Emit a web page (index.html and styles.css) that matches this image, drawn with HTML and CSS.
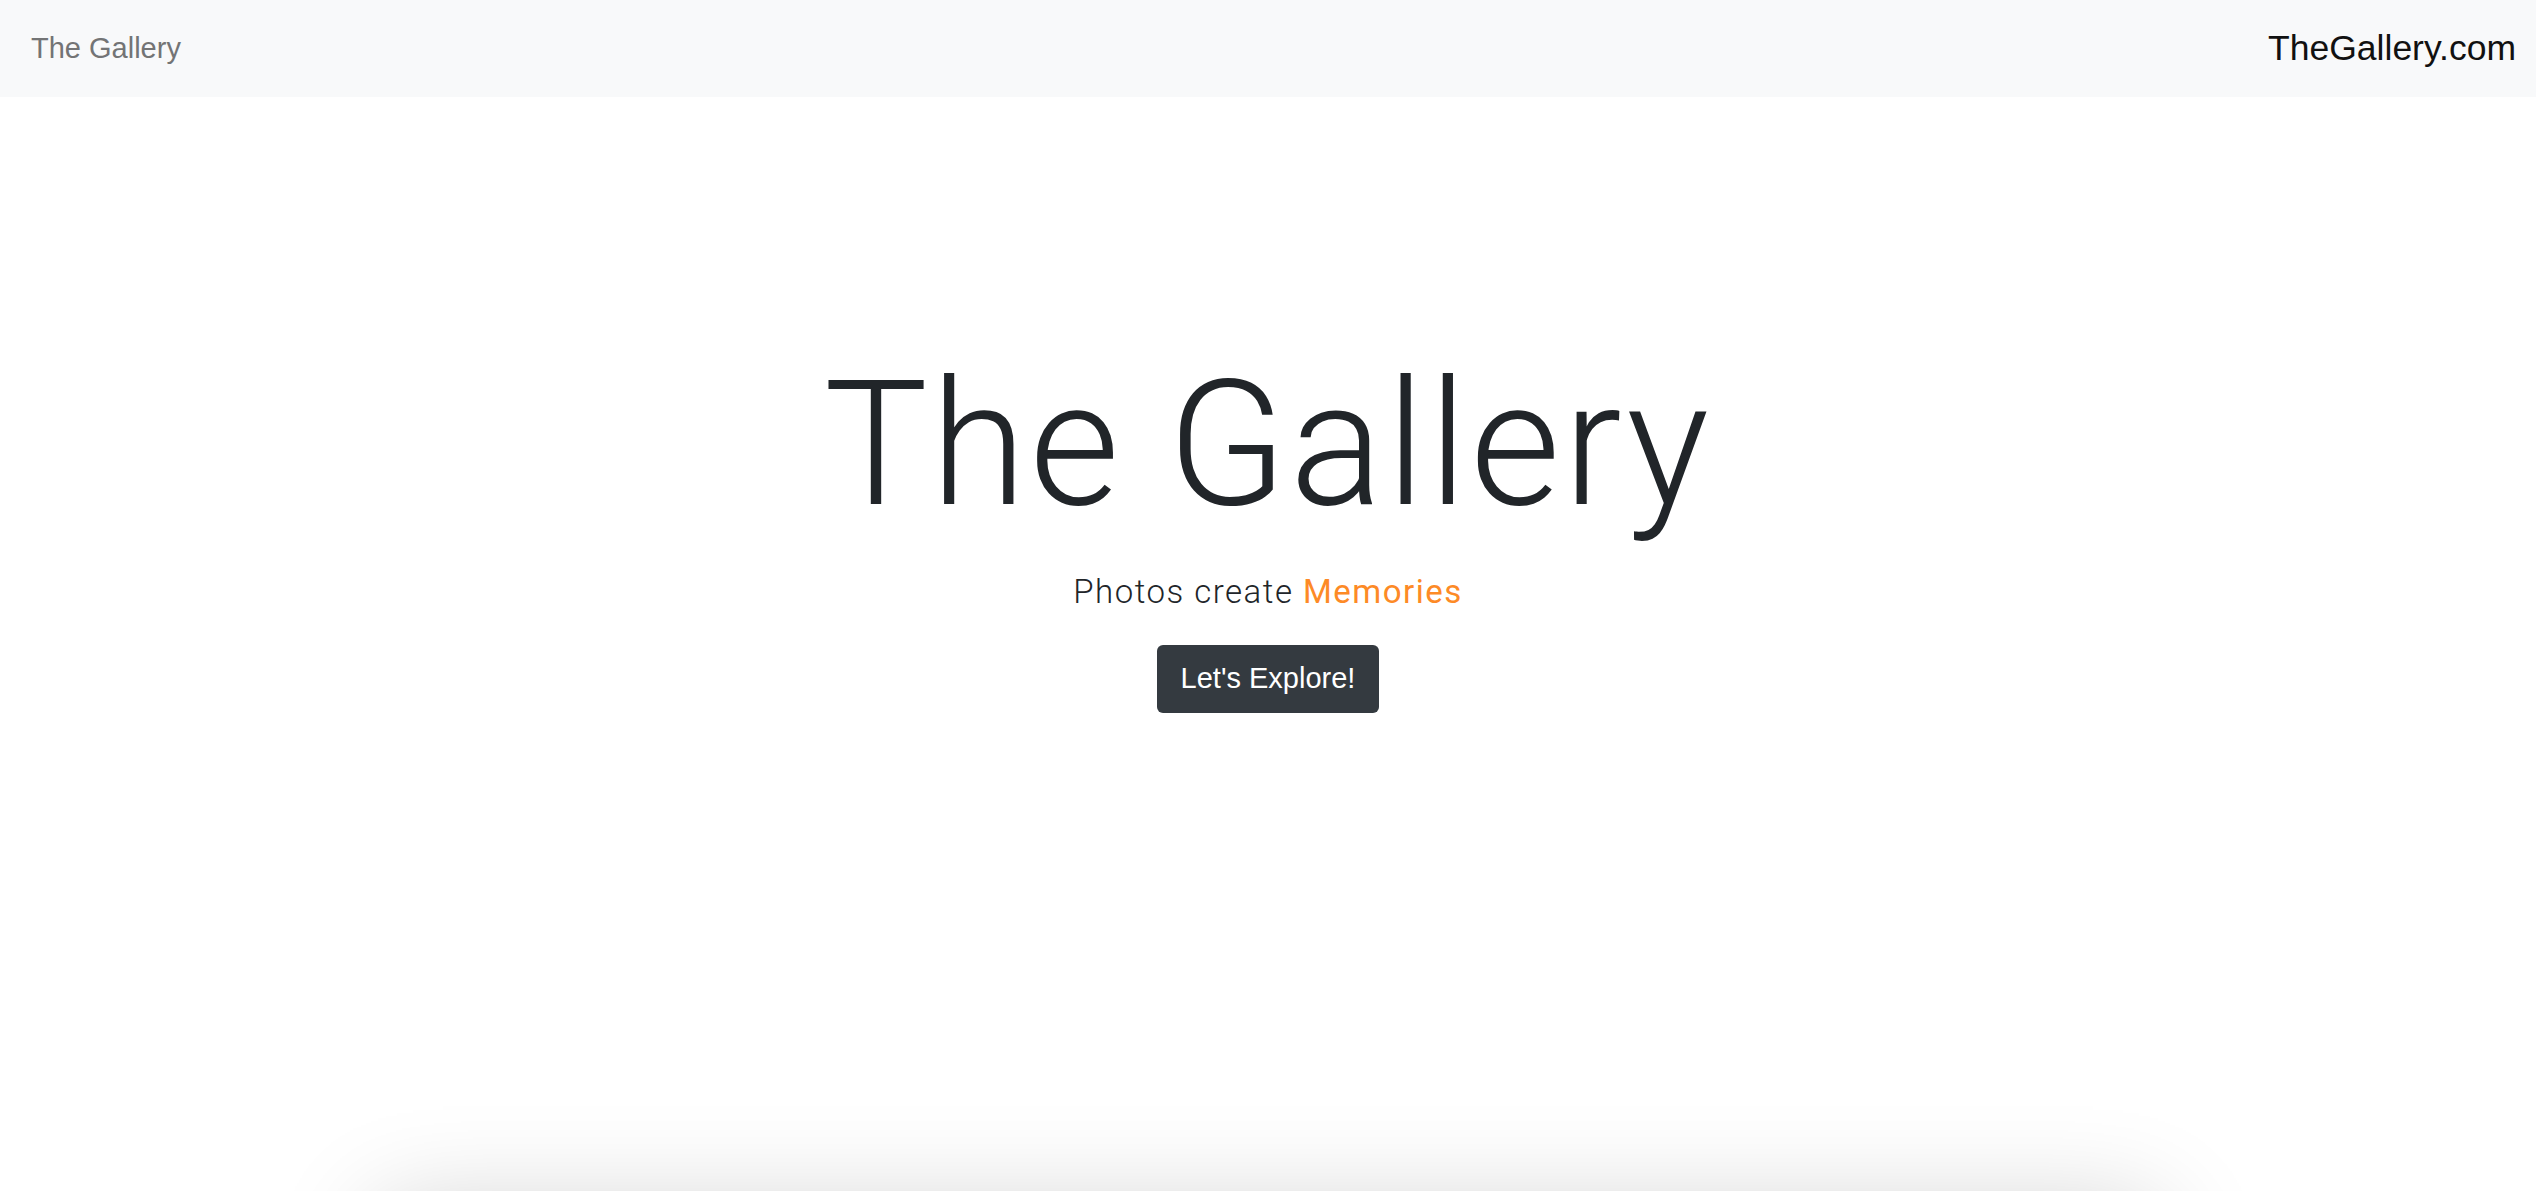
FILE: index.html
```html
<!DOCTYPE html>
<html lang="en">
<head>
<meta charset="utf-8">
<title>The Gallery</title>
<link rel="stylesheet" href="styles.css">
</head>
<body>
<div class="page">
  <nav class="navbar">
    <a class="brand" href="#">The Gallery</a>
    <span class="site">TheGallery.com</span>
  </nav>
  <header class="hero">
    <h1 class="hero-title">The Gallery</h1>
    <p class="hero-sub">Photos create <span class="accent">Memories</span></p>
    <a class="btn-dark" href="#">Let's Explore!</a>
  </header>
  <section class="gallery"></section>
</div>
</body>
</html>
```

FILE: styles.css
```css
html, body {
  margin: 0;
  padding: 0;
}
body {
  background: #fff;
  color: #212529;
  font-family: "Liberation Sans", Arial, sans-serif;
}
.page {
  height: 100vh;
  overflow: hidden;
}
.navbar {
  height: 97px;
  background: #f8f9fa;
  display: flex;
  align-items: center;
  justify-content: space-between;
  padding: 0 20px 0 31px;
  box-sizing: border-box;
}
.brand {
  font-size: 29px;
  color: #737475;
  text-decoration: none;
}
.site {
  font-size: 35.5px;
  color: #111;
}
.hero {
  display: flex;
  flex-direction: column;
  align-items: center;
  padding-top: 261px;
}
.hero-title {
  margin: 0;
  font-family: Roboto, "Liberation Sans", sans-serif;
  font-weight: 300;
  font-size: 174px;
  line-height: 1;
  letter-spacing: 3px;
  color: #212529;
}
.hero-sub {
  margin: 40px 0 0;
  font-family: Roboto, "Liberation Sans", sans-serif;
  font-weight: 300;
  font-size: 33px;
  line-height: 1.2;
  letter-spacing: 1.5px;
  color: #212529;
}
.accent {
  color: #fd8a26;
  font-weight: 400;
}
.btn-dark {
  margin-top: 33px;
  width: 222px;
  height: 68px;
  box-sizing: border-box;
  display: flex;
  align-items: center;
  justify-content: center;
  background: #343a40;
  border-radius: 6px;
  color: #fff;
  font-size: 29px;
  text-decoration: none;
}
.gallery {
  width: 1780px;
  height: 600px;
  margin: 482px auto 0;
  background: #fff;
  box-shadow: 0 16px 100px rgba(0, 0, 0, 0.2);
}
```
